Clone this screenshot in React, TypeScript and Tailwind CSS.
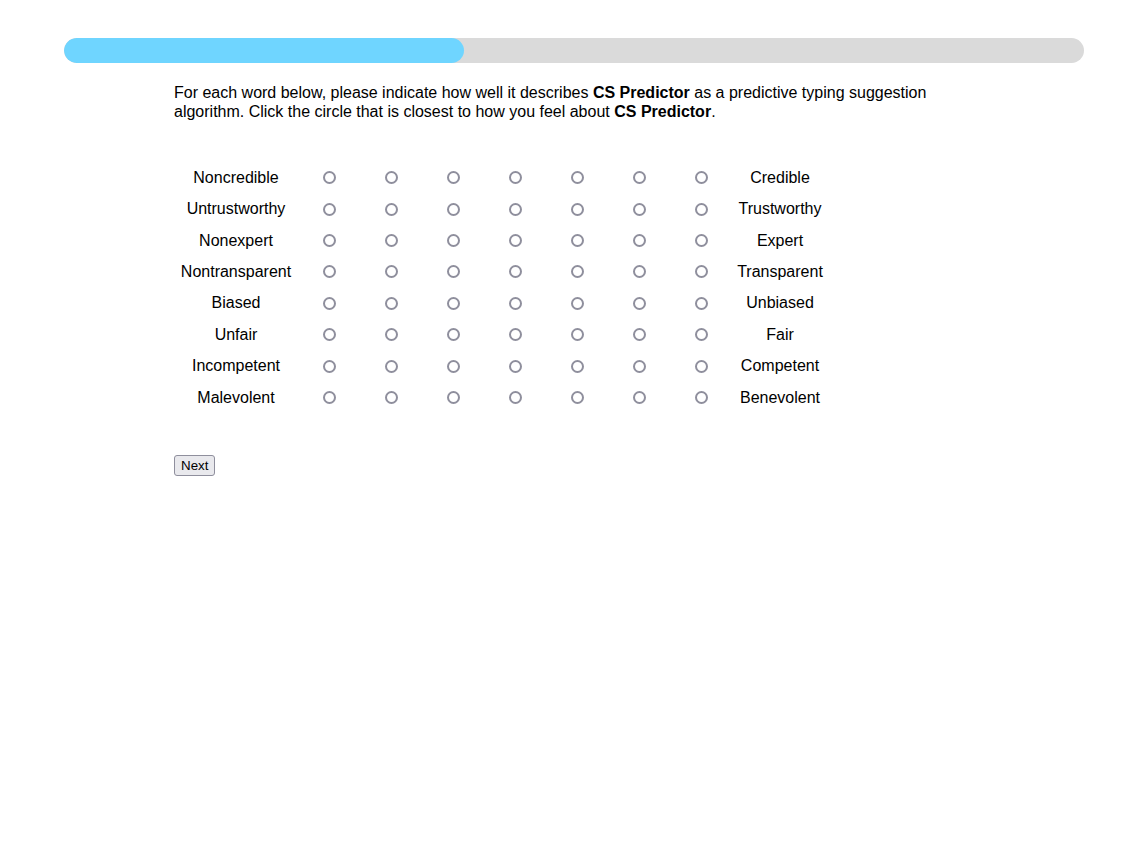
import React from "react"

const ROWS: [string, string][] = [
  ["Noncredible", "Credible"],
  ["Untrustworthy", "Trustworthy"],
  ["Nonexpert", "Expert"],
  ["Nontransparent", "Transparent"],
  ["Biased", "Unbiased"],
  ["Unfair", "Fair"],
  ["Incompetent", "Competent"],
  ["Malevolent", "Benevolent"],
]

const SCALE = [1, 2, 3, 4, 5, 6, 7]

function Radio() {
  return (
    <span
      role="radio"
      aria-checked="false"
      className="block w-[13px] h-[13px] rounded-full border-2 border-[#8f8f9d] bg-white"
    />
  )
}

export default function App() {
  return (
    <div className="min-h-[848px] bg-white text-black font-['Liberation_Sans',Arial,sans-serif]">
      <div className="pt-[38px] px-[64px]">
        {/* Progress */}
        <div className="w-[1020px] h-[25px] rounded-full bg-[#dadada] overflow-hidden">
          <div className="h-full w-[400px] rounded-full bg-[#6fd5ff]" />
        </div>

        <div className="ml-[110px] w-[800px]">
          {/* Intro */}
          <p className="mt-[20px] text-[16px] leading-[19px]">
            For each word below, please indicate how well it describes{" "}
            <b>CS Predictor</b> as a predictive typing suggestion algorithm. Click the
            circle that is closest to how you feel about <b>CS Predictor</b>.
          </p>

          {/* Scale */}
          <div className="mt-[41px] flex flex-col text-[16px]">
            {ROWS.map(([left, right]) => (
              <div key={left} className="flex items-center h-[31.43px]">
                <div className="w-[124px] text-center">{left}</div>
                {SCALE.map((n) => (
                  <div key={n} className="w-[62px] flex justify-center">
                    <Radio />
                  </div>
                ))}
                <div className="w-[96px] text-center">{right}</div>
              </div>
            ))}
          </div>

          {/* Next */}
          <button className="mt-[42px] h-[21px] px-[6px] text-[13.33px] leading-[15px] bg-[#e9e9ed] border border-[#8f8f9d] rounded-[3px] text-black">
            Next
          </button>
        </div>
      </div>
    </div>
  )
}
